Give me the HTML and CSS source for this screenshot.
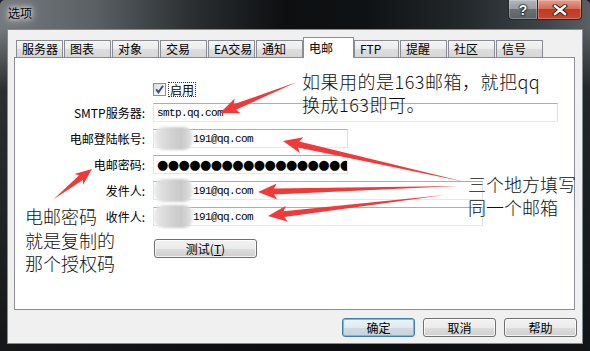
FILE: index.html
```html
<!DOCTYPE html>
<html lang="zh-CN">
<head>
<meta charset="utf-8">
<title>选项</title>
<link rel="stylesheet" href="styles.css">
</head>
<body>
<div class="window">
  <div class="titlebar">
    <span class="title">选项</span>
    <div class="caption-btns">
      <div class="cbtn help">?</div>
      <div class="cbtn close">
        <svg width="16" height="12" viewBox="0 0 16 12">
          <path d="M3 2 L13 10 M13 2 L3 10" stroke="#3a1a12" stroke-width="4.2" stroke-linecap="square"/>
          <path d="M3 2 L13 10 M13 2 L3 10" stroke="#ffffff" stroke-width="2.4" stroke-linecap="square"/>
        </svg>
      </div>
    </div>
  </div>
  <div class="client">
    <div class="tabs">
      <div class="tab">服务器</div>
      <div class="tab">图表</div>
      <div class="tab">对象</div>
      <div class="tab">交易</div>
      <div class="tab">EA交易</div>
      <div class="tab">通知</div>
      <div class="tab active">电邮</div>
      <div class="tab narrow">FTP</div>
      <div class="tab">提醒</div>
      <div class="tab">社区</div>
      <div class="tab">信号</div>
    </div>
    <div class="panel">
      <div class="form">
        <span></span>
        <div class="check-row">
          <span class="checkbox">
            <svg width="11" height="11" viewBox="0 0 11 11"><path d="M2.2 5.2 L4.4 8.4 L9 1.8" fill="none" stroke="#2f4a9a" stroke-width="1.9"/></svg>
          </span>
          <span class="check-label">启用</span>
        </div>

        <span class="lbl">SMTP服务器:</span>
        <div class="field w-long"><span class="val">smtp.qq.com</span></div>

        <span class="lbl">电邮登陆帐号:</span>
        <div class="field w-short"><span class="blob"></span><span class="val">191@qq.com</span></div>

        <span class="lbl">电邮密码:</span>
        <div class="field w-short pwd"><span class="dots">●●●●●●●●●●●●●●●●●●</span></div>

        <span class="lbl">发件人:</span>
        <div class="field w-mid"><span class="blob"></span><span class="val">191@qq.com</span></div>

        <span class="lbl">收件人:</span>
        <div class="field w-mid"><span class="blob"></span><span class="val">191@qq.com</span></div>

        <span></span>
        <div class="btn test">测试(<u>T</u>)</div>
      </div>
    </div>
    <div class="buttons">
      <div class="btn default">确定</div>
      <div class="btn">取消</div>
      <div class="btn">帮助</div>
    </div>
  </div>

  <div class="note note-top">如果用的是163邮箱，就把qq<br>换成163即可。</div>
  <div class="note note-right">三个地方填写<br>同一个邮箱</div>
  <div class="note note-left">电邮密码<br>就是复制的<br>那个授权码</div>

  <svg class="arrows" width="590" height="351" viewBox="0 0 590 351">
    <g fill="#f03a3a">
      <polygon transform="translate(220,113) rotate(-21.9)" points="0,0 19,-8 16,-3 83,0 16,3 19,8"/>
      <polygon transform="translate(283,141) rotate(12.7)" points="0,0 19,-8 16,-3 187,0 16,3 19,8"/>
      <polygon transform="translate(258,192) rotate(-1.7)" points="0,0 19,-8 16,-3 200,0 16,3 19,8"/>
      <polygon transform="translate(268,216) rotate(-6.8)" points="0,0 19,-8 16,-3 178,0 16,3 19,8"/>
      <polygon transform="translate(92,169) rotate(141.7)" points="0,0 17,-7 14,-3 49,0 14,3 17,7"/>
    </g>
  </svg>
</div>
</body>
</html>
```

FILE: styles.css
```css
html, body {
  margin: 0;
  padding: 0;
  background: #1c1f22;
}

.window {
  position: relative;
  width: 590px;
  height: 351px;
  box-sizing: border-box;
  padding: 0 7px 7px 7px;
  display: flex;
  flex-direction: column;
  overflow: hidden;
  border-radius: 5px 5px 0 0;
  font-family: "Noto Sans CJK SC", sans-serif;
  background:
    linear-gradient(180deg, rgba(0,0,0,0) 0, rgba(0,0,0,0) 28px, rgba(14,16,18,0.7) 90px, rgba(10,12,14,0.9) 100%),
    linear-gradient(90deg, #74797d 0%, #5a6064 16%, #2c3033 32%, #0d0f11 48%, #0f1214 62%, #22272a 78%, #3d4347 92%, #596064 100%);
}

/* ---------- title bar ---------- */
.titlebar {
  flex: none;
  height: 29px;
  display: flex;
  align-items: flex-start;
}

.title {
  margin: 4px 0 0 1px;
  font-size: 12px;
  line-height: 18px;
  color: #000;
  text-shadow: 0 0 4px #ffffff, 0 0 8px rgba(255,255,255,0.9), 0 0 12px rgba(255,255,255,0.6);
}

.caption-btns {
  margin-left: auto;
  margin-right: 1px;
  display: flex;
  height: 20px;
}

.cbtn {
  box-sizing: border-box;
  height: 20px;
  border: 1px solid #25292d;
  border-top: none;
  display: flex;
  align-items: center;
  justify-content: center;
  box-shadow: inset 0 0 0 1px rgba(255,255,255,0.25);
}

.help {
  width: 29px;
  border-right: none;
  border-radius: 0 0 0 4px;
  background: linear-gradient(180deg, #b2b7bb 0%, #979da1 45%, #6a7074 50%, #5b6165 100%);
  color: #fff;
  font-family: "Liberation Sans", sans-serif;
  font-weight: bold;
  font-size: 14px;
  line-height: 18px;
  text-shadow: 0 0 1px #000, 0 0 2px #000, 0 0 2px #000;
}

.close {
  width: 45px;
  border-radius: 0 0 4px 0;
  background: linear-gradient(180deg, #e3a08e 0%, #d66c55 45%, #c03a22 50%, #c8472e 100%);
}

/* ---------- client ---------- */
.client {
  flex: 1;
  border: 1px solid #868b8f;
  background: #f0f0f0;
  padding: 7px 0 0 6px;
  display: flex;
  flex-direction: column;
}

.tabs {
  display: flex;
  align-items: flex-end;
  height: 20px;
  padding-left: 2px;
  position: relative;
  z-index: 1;
}

.tab {
  box-sizing: border-box;
  width: 47px;
  height: 17px;
  margin-right: 1px;
  border: 1px solid #898c95;
  border-bottom: none;
  background: linear-gradient(180deg, #f5f5f5 0%, #ebebeb 50%, #dedede 51%, #d6d6d6 100%);
  padding-left: 5px;
  font-size: 12px;
  line-height: 16px;
  color: #000;
  white-space: nowrap;
}

.tab.active {
  width: 51px;
  height: 21px;
  margin: 0 0 -1px -1px;
  padding-top: 2px;
  background: #ffffff;
}

.tab.narrow {
  width: 45px;
}

.panel {
  box-sizing: border-box;
  width: 561px;
  height: 253px;
  border: 1px solid #898c95;
  background: #ffffff;
}

.form {
  display: grid;
  grid-template-columns: 130px auto;
  column-gap: 8px;
  row-gap: 7px;
  padding-top: 25px;
  justify-items: start;
  align-items: center;
}

.lbl {
  justify-self: end;
  font-size: 12px;
  line-height: 19px;
  color: #000;
  white-space: nowrap;
}

.check-row {
  display: flex;
  align-items: center;
  height: 13px;
}

.checkbox {
  box-sizing: border-box;
  width: 13px;
  height: 13px;
  border: 1px solid #8e8f8f;
  background: linear-gradient(135deg, #dcdcdc 0%, #f4f4f4 60%, #ffffff 100%);
  display: flex;
}

.check-label {
  margin-left: 2px;
  padding: 0 1px;
  border: 1px dotted #333;
  font-size: 12px;
  line-height: 13px;
  color: #000;
}

.field {
  box-sizing: border-box;
  height: 19px;
  border: 1px solid;
  border-color: #abadb3 #dbdfe6 #e3e9ef #e2e3ea;
  display: flex;
  align-items: center;
  padding-left: 3px;
  background: #fff;
  font-family: "Liberation Mono", monospace;
  font-size: 11px;
  letter-spacing: -0.6px;
  color: #000;
  white-space: nowrap;
}

.w-long { width: 405px; }
.w-short { width: 195px; }
.w-mid { width: 330px; }

.blob {
  flex: none;
  width: 39px;
  height: 23px;
  margin-left: -3px;
  border-radius: 9px;
  background: linear-gradient(90deg, #ececec 0%, #dedede 20%, #d2d2d2 45%, #c9c9c9 70%, #dadada 90%, #efefef 100%);
  filter: blur(0.8px);
}

.pwd {
  overflow: hidden;
}

.dots {
  font-family: "DejaVu Sans", sans-serif;
  font-size: 13px;
  letter-spacing: -0.6px;
  line-height: 17px;
}

.btn {
  box-sizing: border-box;
  width: 73px;
  height: 19px;
  border: 1px solid #707070;
  border-radius: 3px;
  background: linear-gradient(180deg, #f2f2f2 0%, #ebebeb 50%, #dddddd 51%, #cfcfcf 100%);
  box-shadow: inset 0 0 0 1px rgba(255,255,255,0.75);
  font-size: 12px;
  line-height: 17px;
  text-align: center;
  color: #000;
}

.btn.test {
  width: 103px;
  margin: 6px 0 0 1px;
}

.btn.default {
  border-color: #3c7fb1;
  background: linear-gradient(180deg, #eef4f8 0%, #e1e9ef 50%, #d1dbe4 51%, #c7d2dc 100%);
  box-shadow: inset 0 0 0 1px #5fc2f2;
}

.buttons {
  display: flex;
  justify-content: flex-end;
  gap: 8px;
  margin-top: 8px;
  padding-right: 5px;
}

/* ---------- annotations ---------- */
.note {
  position: absolute;
  font-family: "Noto Sans CJK SC", sans-serif;
  font-weight: 300;
  font-size: 18px;
  line-height: 23px;
  color: #111;
  white-space: nowrap;
  z-index: 2;
}

.note-top {
  left: 302px;
  top: 70px;
  letter-spacing: 0.5px;
}

.note-right {
  left: 468px;
  top: 173px;
}

.note-left {
  left: 25px;
  top: 205px;
  line-height: 23.5px;
}

.arrows {
  position: absolute;
  left: 0;
  top: 0;
  pointer-events: none;
  z-index: 3;
}
```
